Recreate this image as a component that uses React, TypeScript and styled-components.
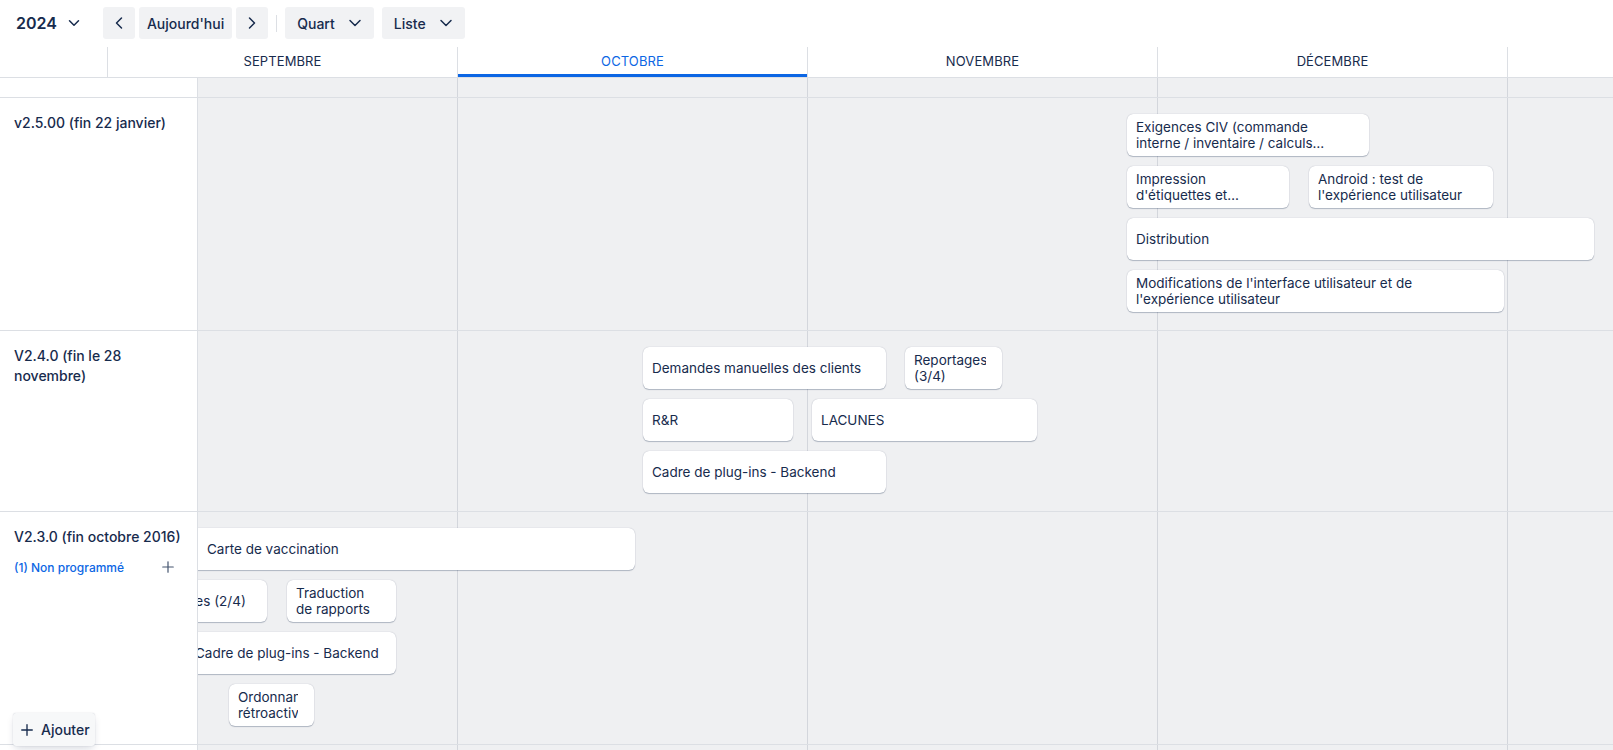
import React from "react";
import styled, { createGlobalStyle, css } from "styled-components";
import { ChevronDown, ChevronLeft, ChevronRight, Plus } from "lucide-react";

const GlobalStyle = createGlobalStyle`
  html, body { margin: 0; padding: 0; background: #ffffff; }
  body {
    font-family: "Inter", "Noto Sans", "Liberation Sans", sans-serif;
    color: #172b4d;
    -webkit-font-smoothing: antialiased;
  }
  * { box-sizing: border-box; }
`;

const INK = "#172b4d";
const BLUE = "#0c66e4";
const LINE = "#dcdfe4";
const GRID = "#d3d6dc";
const LANE = "#eff0f2";
const COL = 350;

const Page = styled.div`
  position: relative;
  width: 1613px;
  height: 750px;
  overflow: hidden;
  background: #fff;
`;

const Toolbar = styled.div`
  display: flex;
  align-items: center;
  height: 47px;
  padding: 0 0 1px 16px;
  gap: 4px;
`;

const YearPicker = styled.button`
  display: flex;
  align-items: center;
  gap: 2px;
  border: 0;
  background: transparent;
  font-family: inherit;
  font-size: 16px;
  font-weight: 600;
  color: ${INK};
  padding: 0;
  margin-right: 16px;
  height: 32px;
  cursor: pointer;
  svg { margin-left: 6px; }
`;

const ToolButton = styled.button<{ $square?: boolean }>`
  display: flex;
  align-items: center;
  justify-content: center;
  gap: 8px;
  height: 32px;
  border: 0;
  border-radius: 3px;
  background: #f1f2f4;
  color: ${INK};
  font-family: inherit;
  font-size: 14px;
  font-weight: 500;
  cursor: pointer;
  ${(p) =>
    p.$square
      ? css`
          width: 32px;
          padding: 0;
        `
      : css`
          padding: 0 8px;
        `}
`;

const DropButton = styled(ToolButton)`
  padding: 0 9px 0 12px;
  gap: 10px;
  margin-right: 4px;
`;

const Divider = styled.span`
  width: 1px;
  height: 17px;
  background: ${LINE};
  margin: 0 4px;
`;

const HeaderRow = styled.div`
  display: flex;
  height: 31px;
  border-bottom: 1px solid ${LINE};
  overflow: hidden;
`;

const HeaderSpacer = styled.div`
  width: 107px;
  flex-shrink: 0;
`;

const MonthCell = styled.div<{ $active?: boolean }>`
  flex-shrink: 0;
  width: ${COL}px;
  border-left: 1px solid ${LINE};
  display: flex;
  align-items: center;
  justify-content: center;
  padding-bottom: 3px;
  font-size: 13px;
  letter-spacing: 0.1px;
  color: ${(p) => (p.$active ? BLUE : INK)};
  box-shadow: ${(p) => (p.$active ? `inset 0 -3px 0 ${BLUE}` : "none")};
`;

const laneBackground = css`
  background-color: ${LANE};
  background-image: linear-gradient(to right, ${GRID} 1px, transparent 1px);
  background-size: ${COL}px 100%;
  background-position: 259px 0;
`;

const Row = styled.div<{ $h: number }>`
  display: flex;
  height: ${(p) => p.$h + 1}px;
  border-bottom: 1px solid ${LINE};
`;

const SideCell = styled.div`
  width: 198px;
  flex-shrink: 0;
  background: #fff;
  border-right: 1px solid ${LINE};
  padding: 15px 12px 0 14px;
`;

const Lane = styled.div`
  flex: 1;
  position: relative;
  overflow: hidden;
  ${laneBackground}
`;

const ReleaseName = styled.div`
  font-size: 14px;
  font-weight: 500;
  line-height: 20px;
  color: ${INK};
  max-width: 172px;
`;

const UnscheduledRow = styled.div`
  display: flex;
  align-items: center;
  justify-content: space-between;
  height: 24px;
  margin-top: 8px;
  padding-right: 5px;
`;

const UnscheduledLink = styled.a`
  font-size: 12px;
  font-weight: 500;
  color: ${BLUE};
  text-decoration: none;
`;

const IconButton = styled.button`
  display: flex;
  align-items: center;
  justify-content: center;
  width: 24px;
  height: 24px;
  padding: 0;
  border: 0;
  background: transparent;
  color: #44546f;
  cursor: pointer;
`;

const Card = styled.div<{ $x: number; $y: number; $w: number; $lead?: number }>`
  position: absolute;
  left: ${(p) => p.$x}px;
  top: ${(p) => p.$y}px;
  width: ${(p) => p.$w}px;
  height: 42px;
  display: flex;
  align-items: center;
  padding: 0 16px 0 ${(p) => p.$lead ?? 9}px;
  background: #fff;
  border-radius: 6px;
  box-shadow: 0 1px 1px rgba(9, 30, 66, 0.25), 0 0 1px rgba(9, 30, 66, 0.31);
`;

const CardText = styled.span`
  display: -webkit-box;
  -webkit-box-orient: vertical;
  -webkit-line-clamp: 2;
  overflow: hidden;
  font-size: 13.5px;
  line-height: 16px;
  color: ${INK};
`;

const AddButton = styled.button`
  position: absolute;
  left: 13px;
  top: 713px;
  height: 33px;
  display: flex;
  align-items: center;
  gap: 5px;
  padding: 0 5px 0 5px;
  border: 0;
  border-radius: 3px;
  background: #f7f8f9;
  color: ${INK};
  font-family: inherit;
  font-size: 14px;
  font-weight: 500;
  box-shadow: 0 4px 8px -2px rgba(9, 30, 66, 0.18), 0 0 1px rgba(9, 30, 66, 0.25);
  cursor: pointer;
`;

type Item = { t: string; x: number; y: number; w: number; lead?: number };
type Release = {
  name: string;
  h: number;
  unscheduled?: number;
  items: Item[];
};

const releases: Release[] = [
  {
    name: "v2.5.00 (fin 22 janvier)",
    h: 232,
    items: [
      { t: "Exigences CIV (commande interne / inventaire / calculs d'approvisionnement)", x: 929, y: 16, w: 242 },
      { t: "Impression d'étiquettes et d'emballages", x: 929, y: 68, w: 162 },
      { t: "Android : test de l'expérience utilisateur", x: 1111, y: 68, w: 184 },
      { t: "Distribution", x: 929, y: 120, w: 467 },
      { t: "Modifications de l'interface utilisateur et de l'expérience utilisateur", x: 929, y: 172, w: 377 },
    ],
  },
  {
    name: "V2.4.0 (fin le 28 novembre)",
    h: 180,
    items: [
      { t: "Demandes manuelles des clients", x: 445, y: 16, w: 243 },
      { t: "Reportages (3/4)", x: 707, y: 16, w: 97 },
      { t: "R&R", x: 445, y: 68, w: 150 },
      { t: "LACUNES", x: 614, y: 68, w: 225 },
      { t: "Cadre de plug-ins - Backend", x: 445, y: 120, w: 243 },
    ],
  },
  {
    name: "V2.3.0 (fin octobre 2016)",
    h: 232,
    unscheduled: 1,
    items: [
      { t: "Carte de vaccination", x: -20, y: 16, w: 457, lead: 29 },
      { t: "Reportages (2/4)", x: -70, y: 68, w: 139 },
      { t: "Traduction de rapports", x: 89, y: 68, w: 109 },
      { t: "Cadre de plug-ins - Backend", x: -12, y: 120, w: 210 },
      { t: "Ordonnance rétroactive", x: 31, y: 172, w: 85 },
    ],
  },
];

const months = ["SEPTEMBRE", "OCTOBRE", "NOVEMBRE", "DÉCEMBRE", "JANVIER"];

export default function App() {
  return (
    <Page>
      <GlobalStyle />
      <Toolbar>
        <YearPicker>
          2024
          <ChevronDown size={18} strokeWidth={2} />
        </YearPicker>
        <ToolButton $square aria-label="Précédent">
          <ChevronLeft size={20} strokeWidth={1.8} />
        </ToolButton>
        <ToolButton>Aujourd'hui</ToolButton>
        <ToolButton $square aria-label="Suivant">
          <ChevronRight size={20} strokeWidth={1.8} />
        </ToolButton>
        <Divider />
        <DropButton>
          Quart
          <ChevronDown size={20} strokeWidth={1.8} />
        </DropButton>
        <DropButton>
          Liste
          <ChevronDown size={20} strokeWidth={1.8} />
        </DropButton>
      </Toolbar>

      <HeaderRow>
        <HeaderSpacer />
        {months.map((m) => (
          <MonthCell key={m} $active={m === "OCTOBRE"}>
            {m === "JANVIER" ? "" : m}
          </MonthCell>
        ))}
      </HeaderRow>

      <Row $h={19}>
        <SideCell />
        <Lane />
      </Row>

      {releases.map((r) => (
        <Row key={r.name} $h={r.h}>
          <SideCell>
            <ReleaseName>{r.name}</ReleaseName>
            {r.unscheduled ? (
              <UnscheduledRow>
                <UnscheduledLink href="#">({r.unscheduled}) Non programmé</UnscheduledLink>
                <IconButton aria-label="Ajouter">
                  <Plus size={18} strokeWidth={1.6} />
                </IconButton>
              </UnscheduledRow>
            ) : null}
          </SideCell>
          <Lane>
            {r.items.map((it, i) => (
              <Card key={i} $x={it.x} $y={it.y} $w={it.w} $lead={it.lead}>
                <CardText>{it.t}</CardText>
              </Card>
            ))}
          </Lane>
        </Row>
      ))}

      <Row $h={120}>
        <SideCell />
        <Lane />
      </Row>

      <AddButton>
        <Plus size={18} strokeWidth={1.8} />
        Ajouter
      </AddButton>
    </Page>
  );
}
